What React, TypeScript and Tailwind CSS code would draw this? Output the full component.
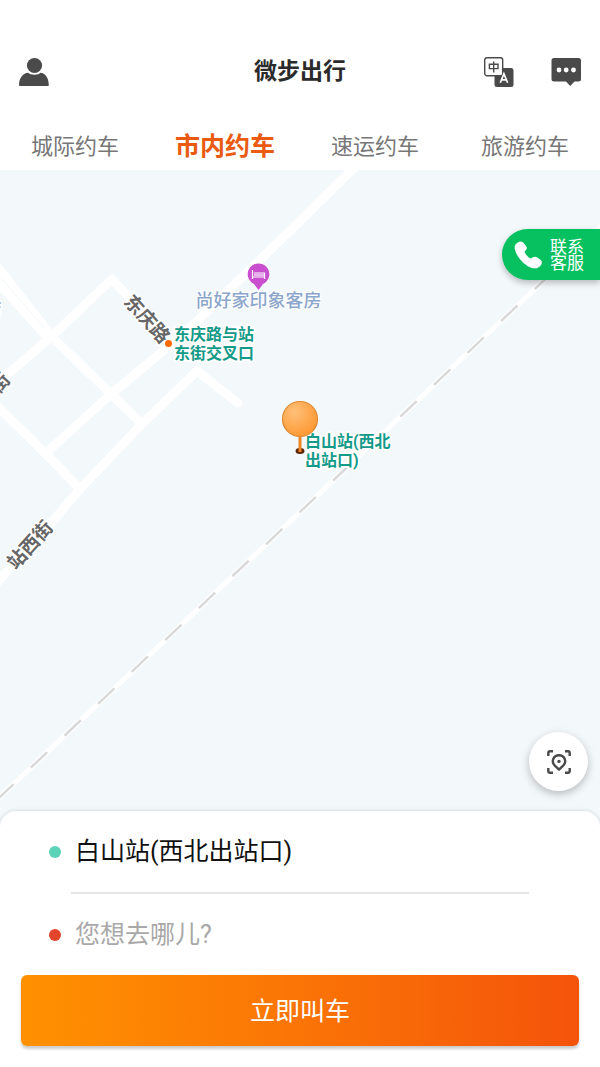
import { useState } from "react";

const tabs = ["城际约车", "市内约车", "速运约车", "旅游约车"];

const roads = [
  "M362 -10 L300 51 L192 156 L168 177 L110 225 L46 283",
  "M-6 92 L52 167 L110 223 L142 254",
  "M-6 108 L48 168",
  "M-6 216 L52 166 L112 109 L170 173",
  "M-6 416 L58 345 L80 319 L142 254 L197 201 L238 233",
  "M-6 233 L46 284 L80 319",
];

const railway = "M-20 646 L618 40";

const UserIcon = () => (
  <svg className="h-[30px] w-[30px]" viewBox="0 0 30 30" fill="#4a4a4a">
    <circle cx="15.5" cy="8.5" r="7.6" />
    <path d="M0 28.2 C0 20.5 4.5 16 9 15.8 C11.5 18.4 19.5 18.4 21.5 15.8 C26 16 29.8 20.5 29.8 28.2 Q29.8 29 29 29 H1 Q0 29 0 28.2Z" />
  </svg>
);

const TranslateIcon = () => (
  <svg className="h-[30px] w-[30px]" viewBox="0 0 30 30">
    <rect x="10.5" y="11" width="19" height="19" rx="2.5" fill="#4a4a4a" />
    <rect x="0.7" y="0.7" width="18" height="18" rx="2.2" fill="#fff" stroke="#4a4a4a" strokeWidth="1.4" />
    <path d="M5.4 7.2 H14 V11.6 H5.4Z M9.7 4.6 V15.4" fill="none" stroke="#4a4a4a" strokeWidth="1.4" />
    <path d="M16.3 25.8 L19.9 16.8 L23.6 25.8 M17.6 22.8 H22.3" fill="none" stroke="#fff" strokeWidth="1.7" />
  </svg>
);

const ChatIcon = () => (
  <svg className="h-[30px] w-[30px]" viewBox="0 0 30 30">
    <path
      d="M3 1 H27.5 Q30 1 30 3.5 V22 Q30 24.5 27.5 24.5 H23.5 L19.2 29 L15 24.5 H3 Q0.5 24.5 0.5 22 V3.5 Q0.5 1 3 1Z"
      fill="#4a4a4a"
    />
    <circle cx="8" cy="13" r="2.4" fill="#fff" />
    <circle cx="15.2" cy="13" r="2.4" fill="#fff" />
    <circle cx="22.5" cy="13" r="2.4" fill="#fff" />
  </svg>
);

const PhoneIcon = () => (
  <svg className="h-7 w-7" viewBox="0 0 28 28" fill="#fff">
    <path d="M4.2 1.2 C6 0.2 8 0.3 9.4 1.8 L12 5 C13.2 6.6 13 8 11.7 9.3 C10.3 10.6 10.5 11.6 11.8 13.2 C13.3 15.1 14.2 16.3 16 17.2 C17 17.7 17.6 17.3 18.5 16.6 C20.2 15.3 21.8 15.4 23.4 16.6 L26.4 18.8 C28.2 20.3 28.2 22.2 27 24 C25.2 26.8 22.2 27.8 18.8 27.2 C14.8 26.4 9.6 22.6 6 18.2 C2.8 14.2 0.8 10 0.6 6.8 C0.5 4.2 2 2.4 4.2 1.2Z" />
  </svg>
);

const LocateIcon = () => (
  <svg className="h-6 w-6" viewBox="0 0 24 24" fill="none" stroke="#4a4a4a" strokeWidth="2.4">
    <path d="M1.3 6 V3 Q1.3 1.3 3 1.3 H6 M18 1.3 H21 Q22.7 1.3 22.7 3 V6 M22.7 18 V21 Q22.7 22.7 21 22.7 H18 M6 22.7 H3 Q1.3 22.7 1.3 21 V18" />
    <path d="M12 19.6 L7.6 15.4 C4.2 12 6 5.2 12 5.2 C18 5.2 19.8 12 16.4 15.4Z" strokeLinejoin="round" />
    <circle cx="12" cy="11.4" r="1.7" fill="#4a4a4a" stroke="none" />
  </svg>
);

const MapCanvas = () => (
  <svg className="absolute inset-0 h-full w-full">
    <defs>
      <radialGradient id="pin" cx="0.35" cy="0.3" r="0.7">
        <stop offset="0" stopColor="#ffc07a" />
        <stop offset="1" stopColor="#fd9a35" />
      </radialGradient>
    </defs>

    <g fill="none" stroke="#fff" strokeWidth="9" strokeLinejoin="round" strokeLinecap="round">
      {roads.map((d) => (
        <path key={d} d={d} />
      ))}
    </g>
    <path d="M2 109 L44 158" stroke="#f3f8fb" strokeWidth="1" />

    <path d={railway} stroke="#fff" strokeWidth="5" />
    <path d={railway} stroke="#d8d9d8" strokeWidth="2.5" strokeDasharray="22.5 23.83" strokeDashoffset="-23.83" />

    {/* street names */}
    <g
      fontSize="19"
      fontWeight="700"
      fill="#666"
      stroke="#fff"
      strokeWidth="3"
      strokeLinejoin="round"
      paintOrder="stroke"
      textAnchor="middle"
      dominantBaseline="central"
    >
      <text transform="translate(147 149) rotate(48)">东庆路</text>
      <text transform="translate(30 375) rotate(-48)">站西街</text>
      <text transform="translate(0 213) rotate(-48)">街</text>
      <text x="-7" y="139" fontSize="17" fill="#a0b6d4">店</text>
    </g>

    {/* hotel */}
    <path d="M258.500 120 L254 114 A10.800 10.800 0 1 1 263 114Z" fill="#c94fce" />
    <path
      d="M252.500 100 V109 M252.500 107 H264.500 V109 M264.500 107 V103 H254"
      fill="none"
      stroke="#fff"
      strokeWidth="1.2"
    />
    <path d="M254 104 H264 V106 H254Z" fill="#e9b6eb" />
    <text
      x="258.500"
      y="137"
      fontSize="18"
      fontWeight="500"
      fill="#8ca6cc"
      stroke="#fff"
      strokeWidth="2"
      paintOrder="stroke"
      textAnchor="middle"
    >
      尚好家印象客房
    </text>

    {/* pick-up points */}
    <circle cx="168.500" cy="173.500" r="4.500" fill="#fff" />
    <circle cx="168.500" cy="173.500" r="3.500" fill="#ff6a00" />
    <g fontSize="16" fontWeight="700" fill="#149a88" stroke="#fff" strokeWidth="4" strokeLinejoin="round" paintOrder="stroke">
      <text x="174" y="170">东庆路与站</text>
      <text x="174" y="189">东街交叉口</text>
      <text x="305" y="277">白山站(西北</text>
      <text x="305" y="296">出站口)</text>
    </g>

    <ellipse cx="300" cy="281" rx="4.500" ry="3" fill="#5a2408" />
    <path d="M300 262 V282" stroke="#ef8423" strokeWidth="3" />
    <circle cx="300" cy="249" r="17.500" fill="url(#pin)" stroke="#dd8a35" strokeWidth="1.200" />
  </svg>
);

export default function App() {
  const [activeTab, setActiveTab] = useState(1);
  const [from, setFrom] = useState("白山站(西北出站口)");
  const [to, setTo] = useState("");

  return (
    <div className="flex min-h-screen flex-col bg-white font-['Roboto','Noto_Sans_CJK_SC',sans-serif]">
      <header className="pt-10">
        <div className="grid h-16 grid-cols-[1fr_auto_1fr] items-center px-[19px]">
          <button aria-label="个人中心" className="justify-self-start">
            <UserIcon />
          </button>
          <h1 className="text-[23px] leading-8 font-bold text-[#2b2b2b]">微步出行</h1>
          <div className="flex gap-[37px] justify-self-end">
            <button aria-label="切换语言">
              <TranslateIcon />
            </button>
            <button aria-label="消息">
              <ChatIcon />
            </button>
          </div>
        </div>
        <nav className="mt-5 grid h-[46px] grid-cols-4">
          {tabs.map((tab, i) => (
            <button
              key={tab}
              onClick={() => setActiveTab(i)}
              className={
                i === activeTab
                  ? "text-[25px] leading-8 font-bold text-[#ea5a10]"
                  : "text-[22px] leading-8 font-normal text-[#777]"
              }
            >
              {tab}
            </button>
          ))}
        </nav>
      </header>

      <main className="relative flex-1 overflow-hidden bg-[#f3f8fb]">
        <MapCanvas />
        <a
          href="#service"
          className="absolute top-[59px] right-0 flex h-[51px] items-center gap-2 rounded-l-full bg-[#07c160] pr-4 pl-3 text-white shadow-[0_3px_6px_rgba(0,0,0,0.25)]"
        >
          <PhoneIcon />
          <span className="text-[17px] leading-4">
            联系
            <br />
            客服
          </span>
        </a>
        <button
          aria-label="定位"
          className="absolute right-3 bottom-9 flex h-[59px] w-[59px] items-center justify-center rounded-full bg-white shadow-[0_3px_8px_rgba(0,0,0,0.25)]"
        >
          <LocateIcon />
        </button>
      </main>

      <section className="relative -mt-4 rounded-t-2xl bg-white px-[21px] pb-[21px] shadow-[0_0_4px_rgba(0,0,0,0.15)]">
        <label className="flex h-[81px] items-center gap-[14px] pl-7">
          <span className="h-3 w-3 rounded-full bg-[#5ad3b8]" />
          <input
            aria-label="出发地"
            value={from}
            onChange={(e) => setFrom(e.target.value)}
            className="min-w-0 flex-1 text-[25px] leading-9 text-[#111] outline-none"
          />
        </label>
        <div className="mx-[50px] h-[2px] bg-[#e6e6e6]" />
        <label className="flex h-[81px] items-center gap-[14px] pl-7">
          <span className="h-3 w-3 rounded-full bg-[#e2452c]" />
          <input
            aria-label="目的地"
            value={to}
            placeholder="您想去哪儿?"
            onChange={(e) => setTo(e.target.value)}
            className="min-w-0 flex-1 text-[25px] leading-9 outline-none placeholder:text-[#a8a8a8]"
          />
        </label>
        <button className="h-[71px] w-full rounded-md bg-linear-to-r from-[#ff9100] to-[#f4530a] pt-[2px] text-[25px] leading-9 font-normal text-white shadow-[0_3px_3px_rgba(0,0,0,0.2)]">
          立即叫车
        </button>
      </section>
    </div>
  );
}
